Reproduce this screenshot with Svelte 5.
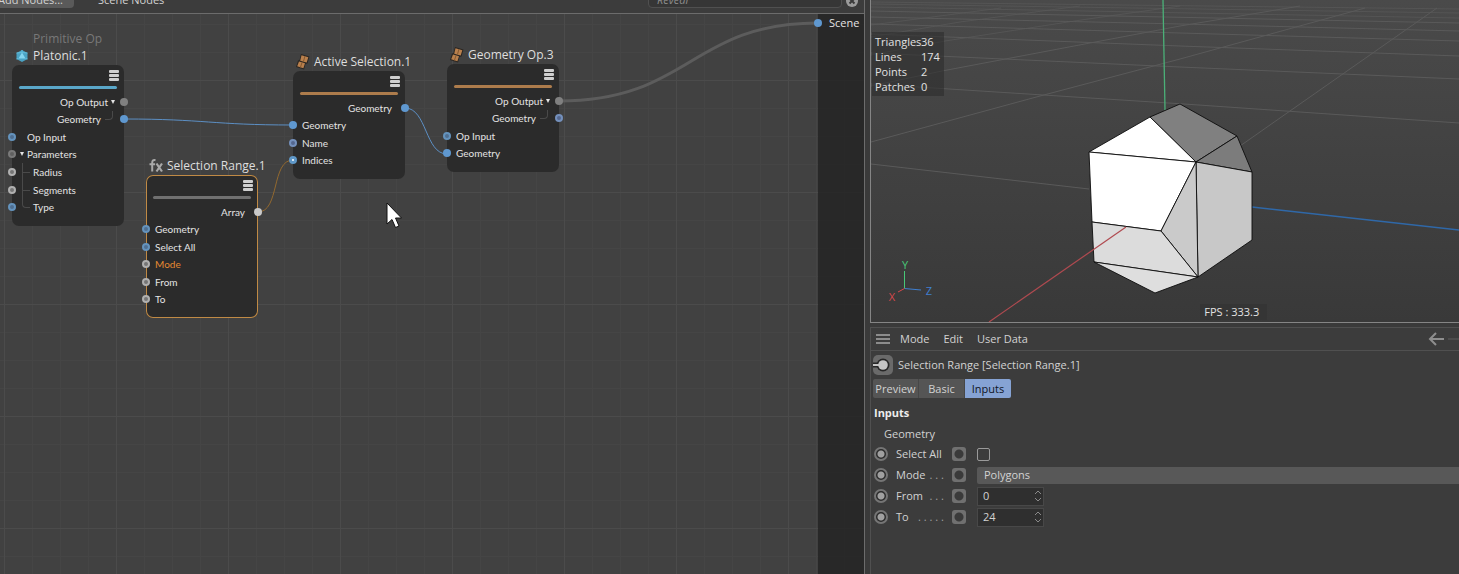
<script>
  // Canvas size follows the pane, the last wire is tied to the scene strip
  let canvasWidth = $state(865);
  const STRIP = 46;
  const NODE_WIDTH = 112;

  let sceneX = $derived(canvasWidth - STRIP);

  let menu = ["Mode", "Edit", "User Data"];
  let tabs = ["Preview", "Basic", "Inputs"];
  let activeTab = $state("Inputs");

  let selectAll = $state(false);
  let mode = $state("Polygons");
  let from = $state(0);
  let to = $state(24);

  let stats = [
    ["Triangles", 36],
    ["Lines", 174],
    ["Points", 2],
    ["Patches", 0],
  ];

  let nodes = [
    {
      title: "Platonic.1",
      sub: "Primitive Op",
      icon: "platonic",
      accent: "blue",
      x: 12,
      y: 51,
      rows: [
        { label: "Op Output", side: "out", port: "grey", arrow: true },
        { label: "Geometry", side: "out", port: "on", branch: true },
        { label: "Op Input", side: "in", port: "blue", gap: true },
        { label: "Parameters", side: "in", port: "dim", arrow: true },
        { label: "Radius", side: "in", port: "light", branch: true },
        { label: "Segments", side: "in", port: "light", branch: true },
        { label: "Type", side: "in", port: "blue", branch: true },
      ],
    },
    {
      title: "Active Selection.1",
      icon: "geo",
      accent: "orange",
      x: 293,
      y: 57,
      rows: [
        { label: "Geometry", side: "out", port: "on" },
        { label: "Geometry", side: "in", port: "on" },
        { label: "Name", side: "in", port: "violet" },
        { label: "Indices", side: "in", port: "array" },
      ],
    },
    {
      title: "Geometry Op.3",
      icon: "geo",
      accent: "orange",
      x: 447,
      y: 50,
      rows: [
        { label: "Op Output", side: "out", port: "grey", arrow: true },
        { label: "Geometry", side: "out", port: "violet", branch: true },
        { label: "Op Input", side: "in", port: "blue" },
        { label: "Geometry", side: "in", port: "on" },
      ],
    },
    {
      title: "Selection Range.1",
      icon: "fx",
      accent: "grey",
      selected: true,
      x: 146,
      y: 161,
      rows: [
        { label: "Array", side: "out", port: "white" },
        { label: "Geometry", side: "in", port: "blue" },
        { label: "Select All", side: "in", port: "blue" },
        { label: "Mode", side: "in", port: "light", hot: true },
        { label: "From", side: "in", port: "light" },
        { label: "To", side: "in", port: "light" },
      ],
    },
  ];

  const nodeHeight = (node) => 38 + Math.ceil((node.rows.length * 35) / 2);
</script>

<div class="app">
  <section class="editor">
    <header class="toolbar">
      <button class="toolbar__add">Add Nodes...</button>
      <span class="toolbar__title">Scene Nodes</span>
      <input class="toolbar__search" type="text" placeholder="Reveal" aria-label="Reveal" />
      <button class="toolbar__clear" aria-label="Clear">
        <svg width="14" height="14" viewBox="0 0 14 14">
          <circle cx="7" cy="7" r="6" fill="#9b9b9b" />
          <path d="M4.500 4.500l5 5M9.500 4.500l-5 5" stroke="#3a3a3a" stroke-width="2" />
        </svg>
      </button>
    </header>

    <div class="canvas" bind:clientWidth={canvasWidth}>
      <div class="strip"></div>
      <svg class="wires">
        <path class="wire wire--op" d="M559 87C690 87 690 9 {sceneX} 9" />
        <path class="wire wire--geo" d="M124 105C205 105 212 111 293 111" />
        <path class="wire wire--geo" d="M405 94C427 94 425 140 447 140" />
        <path class="wire wire--array" d="M258 198C280 198 271 146 293 146" />
      </svg>

      <div class="scene">
        <i class="port port--on"></i>
        <span>Scene</span>
      </div>

      {#each nodes as node}
        <article
          class="node"
          class:node--selected={node.selected}
          style="left: {node.x}px; top: {node.y}px; width: {NODE_WIDTH}px; height: {nodeHeight(node)}px"
        >
          <div class="node__title">
            {#if node.sub}
              <small>{node.sub}</small>
            {/if}
            {#if node.icon == "platonic"}
              <svg width="14" height="14" viewBox="0 0 14 14">
                <path d="M7 1l5.500 3v6L7 13 1.500 10V4z" fill="#4aa3c4" />
                <path d="M7 3.500l3.500 6h-7z" fill="#84d6f0" />
                <path d="M7 1v2.500L1.500 4M7 3.500l5.500.5M3.500 9.500l-2 .5M10.500 9.500l2 .5" stroke="#63bddb" fill="none" />
              </svg>
            {:else if node.icon == "geo"}
              <svg width="14" height="16" viewBox="0 0 14 16">
                <path d="M5 0l8.500 2.500-2 7-2 .5-1.500 5.500L0 13 2 6.500l1.500-.5z" fill="#2b2622" />
                <path d="M5.500 1.200l6.800 2-1.600 5.300L4.200 6.700zM3 7.500l6 1.800-1.600 5L1.200 12.300z" fill="#b9804d" />
                <path d="M9 2L7.400 7.700M6 8.500L4.400 13.500" stroke="#84582f" />
              </svg>
            {:else}
              <svg width="14" height="14" viewBox="0 0 14 14">
                <path d="M6.500 1.200C4 .6 3.200 1.800 3.200 4v8.500M0.500 5.300h5.500" stroke="#a9a9a9" stroke-width="2" fill="none" />
                <path d="M7.500 4.500l5.500 8M13 4.500l-5.500 8" stroke="#a9a9a9" stroke-width="2.200" />
              </svg>
            {/if}
            <h2>{node.title}</h2>
          </div>

          <button class="node__menu" aria-label="{node.title} menu"><i></i><i></i><i></i></button>
          <div class="node__accent node__accent--{node.accent}"></div>

          <ul class="rows">
            {#each node.rows as row, i}
              <li class="row row--{row.side}">
                {#if row.side == "in"}
                  <i class="port port--{row.port}"></i>
                  {#if row.arrow}
                    <i class="arrow"></i>
                  {:else if row.branch}
                    <i class="branch" class:branch--last={!node.rows[i + 1]}></i>
                  {/if}
                  <span class:gap={row.gap} class:hot={row.hot} class:tight={row.arrow || row.branch}>{row.label}</span>
                {:else}
                  <span>{row.label}</span>
                  {#if row.arrow}
                    <i class="arrow"></i>
                  {:else if row.branch}
                    <i class="branch branch--last"></i>
                  {/if}
                  <i class="port port--{row.port}"></i>
                {/if}
              </li>
            {/each}
          </ul>
        </article>
      {/each}

      <svg class="cursor" width="16" height="28" viewBox="0 0 16 28">
        <path d="M1 1v21l5-4.500 3.500 8 3.500-1.500-3.500-8h6z" fill="#fff" stroke="#111" />
      </svg>
    </div>
  </section>

  <div class="side">
    <section class="viewport">
      <svg class="viewport__scene" viewBox="871 0 588 322" preserveAspectRatio="xMinYMin slice">
        <g class="grid">
          <path d="M871 164L1089 189M871 84L1184 104 1459 123M871 53L1180 67 1459 79M871 34L1180 46 1459 56" />
          <path d="M871 24L1180 33 1459 41M871 17L1180 24 1459 31M871 11L1459 23" />
          <path d="M871 7L1459 18M871 4L1459 13M871 2L1459 9" opacity=".7" />
          <path d="M871 142L1040 96 1180 59 1365 8M1240 146L1437 8M871 86L942 71 1180 26 1300 6" />
          <path d="M871 55L945 41 1081 20 1180 6M871 37L960 22 1080 6M871 25L1001 8" opacity=".7" />
        </g>
        <path d="M1163 0L1165 110" stroke="#4bb078" stroke-width="1.300" />
        <path d="M1252 207L1459 230" stroke="#2f68a8" stroke-width="1.300" />

        <g class="solid">
          <path d="M1150 117L1180 104 1237 136 1196 162z" fill="#808080" />
          <path d="M1237 136L1252 172 1196 162z" fill="#7c7c7c" />
          <path d="M1089 152L1150 117 1196 162z" fill="#fff" />
          <path d="M1089 152L1196 162 1161 231 1092 222z" fill="#fff" />
          <path d="M1196 162L1252 172V240L1198 277z" fill="#c8c8c8" />
          <path d="M1196 162L1198 277 1161 231z" fill="#cacaca" />
          <path d="M1092 222L1161 231 1198 277 1094 262z" fill="#dcdcdc" />
          <path d="M1094 262L1198 277 1155 293z" fill="#dedede" />
        </g>
        <path d="M1126 227L989 322" stroke="#b04a50" stroke-width="1.200" />

        <g class="gizmo">
          <path d="M904.500 288.500V271" stroke="#48c878" />
          <path d="M904.500 288.500L921 290" stroke="#3f7fd0" />
          <path d="M904.500 288.500L898 292" stroke="#d8484c" />
          <text x="905" y="269" fill="#48c878">Y</text>
          <text x="929" y="295" fill="#3f7fd0">Z</text>
          <text x="892" y="301" fill="#d8484c">X</text>
        </g>
      </svg>

      <dl class="stats">
        {#each stats as [name, count]}
          <dt>{name}</dt>
          <dd>{count}</dd>
        {/each}
      </dl>
      <div class="fps">FPS : 333.3</div>
    </section>

    <section class="panel">
      <nav class="menu">
        <button class="menu__burger" aria-label="Menu"><i></i><i></i><i></i></button>
        {#each menu as item}
          <button>{item}</button>
        {/each}
        <button class="menu__back" aria-label="Back">
          <svg width="31" height="14" viewBox="0 0 31 14" fill="none" stroke-width="2">
            <path d="M8 1L2 7l6 6M2 7h14" stroke="#8e8e8e" />
            <path d="M20 7h14" stroke="#4c4c4c" />
          </svg>
        </button>
      </nav>

      <div class="object">
        <svg width="20" height="20" viewBox="0 0 20 20">
          <rect width="20" height="20" rx="5" fill="#6a6a6a" />
          <path d="M0 10h6" stroke="#262626" stroke-width="5" />
          <circle cx="10" cy="10" r="6.500" fill="#262626" />
          <path d="M0 10h8" stroke="#c4c4c4" stroke-width="2" />
          <circle cx="10" cy="10" r="4.800" fill="#c4c4c4" />
        </svg>
        <span>Selection Range [Selection Range.1]</span>
      </div>

      <div class="tabs">
        {#each tabs as tab}
          <button class="tab" class:tab--active={tab == activeTab} onclick={() => (activeTab = tab)}>{tab}</button>
        {/each}
      </div>

      <h3>Inputs</h3>
      <p class="group">Geometry</p>

      <div class="fields">
        {#snippet lead(id, label, dots)}
          <button class="key" aria-label="Keyframe {label}"></button>
          <label for={id}>{label}<span>{dots}</span></label>
          <button class="socket" aria-label="Port {label}"></button>
        {/snippet}

        <div class="field">
          {@render lead("select-all", "Select All", "")}
          <input id="select-all" type="checkbox" bind:checked={selectAll} />
        </div>
        <div class="field">
          {@render lead("mode", "Mode", ". . .")}
          <select id="mode" bind:value={mode}>
            <option>Points</option>
            <option>Edges</option>
            <option>Polygons</option>
          </select>
        </div>
        <div class="field">
          {@render lead("from", "From", ". . .")}
          <div class="number">
            <input id="from" type="number" bind:value={from} />
            <svg width="8" height="12" viewBox="0 0 8 12"><path d="M1 4l3-3 3 3M1 8l3 3 3-3" /></svg>
          </div>
        </div>
        <div class="field">
          {@render lead("to", "To", ". . . . .")}
          <div class="number">
            <input id="to" type="number" bind:value={to} />
            <svg width="8" height="12" viewBox="0 0 8 12"><path d="M1 4l3-3 3 3M1 8l3 3 3-3" /></svg>
          </div>
        </div>
      </div>
    </section>
  </div>
</div>

<style>
  :global(body) {
    margin: 0;
    background: #3a3a3a;
  }

  .app {
    display: grid;
    grid-template-columns: 865fr 589fr;
    column-gap: 5px;
    height: 100vh;
    overflow: hidden;
    color: #d2d2d2;
    background: #3a3a3a;
    font-family: "Open Sans", "Noto Sans", sans-serif;
    font-size: 11px;
    line-height: 16px;
  }

  button,
  input,
  select {
    margin: 0;
    padding: 0;
    border: 0;
    background: none;
    color: inherit;
    font: inherit;
  }

  h2,
  h3,
  p,
  ul,
  dl,
  dd {
    margin: 0;
    padding: 0;
  }

  /* node editor */
  .editor {
    display: flex;
    flex-direction: column;
    min-width: 0;
    border-right: 1px solid #6c6c6c;
  }

  .toolbar {
    display: flex;
    align-items: flex-end;
    box-sizing: border-box;
    height: 14px;
    padding-bottom: 5px;
    overflow: hidden;
    background: #3c3c3c;
    border-bottom: 1px solid #6c6c6c;
  }

  .toolbar__add {
    display: flex;
    justify-content: flex-end;
    width: 74px;
    height: 16px;
    padding-right: 11px;
    white-space: nowrap;
    background: #5a5a5a;
    border-radius: 0 0 4px 0;
  }

  .toolbar__title {
    flex: 1;
    height: 16px;
    padding-left: 24px;
  }

  .toolbar__search {
    box-sizing: border-box;
    width: 194px;
    height: 17px;
    padding-left: 8px;
    font-style: italic;
    background: #363636;
    border: 1px solid #505050;
    border-radius: 0 0 4px 4px;
  }

  .toolbar__search::placeholder {
    color: #8c8c8c;
  }

  .toolbar__clear {
    display: flex;
    margin: 0 5px 0 3px;
  }

  .canvas {
    position: relative;
    flex: 1;
    overflow: hidden;
    background:
      repeating-linear-gradient(90deg, #4b4b4b 0 1px, transparent 1px 112px) 4px 0,
      repeating-linear-gradient(#4b4b4b 0 1px, transparent 1px 112px) 0 -46px,
      repeating-linear-gradient(90deg, #454545 0 1px, transparent 1px 28px) 4px 0,
      repeating-linear-gradient(#454545 0 1px, transparent 1px 28px) 0 -18px,
      #414141;
  }

  .strip {
    position: absolute;
    top: 0;
    right: 0;
    bottom: 0;
    width: 46px;
    background: rgba(34, 34, 34, 0.8);
  }

  .wires {
    position: absolute;
    inset: 0;
    width: 100%;
    height: 100%;
  }

  .wire {
    fill: none;
    stroke-width: 1px;
  }

  .wire--op {
    stroke: #5c5c5c;
    stroke-width: 3px;
  }

  .wire--geo {
    stroke: #5c8fc4;
  }

  .wire--array {
    stroke: #93692f;
  }

  .scene {
    position: absolute;
    top: 1px;
    right: 5px;
    display: flex;
    align-items: center;
    gap: 7px;
    width: 45px;
    color: #e4e4e4;
  }

  .node {
    position: absolute;
    display: flex;
    flex-direction: column;
    box-sizing: border-box;
    padding: 5px 0 10px;
    background: #2b2b2b;
    border-radius: 7px;
  }

  .node--selected {
    box-shadow: inset 0 0 0 1px #c08a45;
  }

  .node__title {
    position: absolute;
    bottom: 100%;
    left: 3px;
    display: grid;
    grid-template-columns: 14px auto;
    align-items: center;
    column-gap: 4px;
    padding-bottom: 1px;
    white-space: nowrap;
  }

  .node__title small,
  .node__title h2 {
    grid-column: 2;
    font-size: 12px;
    font-weight: 400;
    line-height: 17px;
    color: #dedede;
  }

  .node__title small {
    color: #787878;
  }

  .node__menu {
    align-self: flex-end;
    display: grid;
    gap: 1px;
    margin: 0 5px 5px 0;
  }

  .node__menu i {
    width: 10px;
    height: 3px;
    background: #cfcfcf;
    border-radius: 1px;
  }

  .node__accent {
    height: 3px;
    margin: 0 7px 4px;
    border-radius: 2px;
  }

  .node__accent--blue {
    background: #5aa7c9;
  }

  .node__accent--orange {
    background: #ad7c4c;
  }

  .node__accent--grey {
    background: #707070;
  }

  .rows {
    flex: 1;
    display: grid;
    grid-auto-rows: 1fr;
    list-style: none;
  }

  .row {
    position: relative;
    display: flex;
    align-items: center;
    min-height: 0;
    margin: 0 -4px;
    font-family: Lato, "Open Sans", sans-serif;
    font-size: 10px;
    line-height: 16px;
    color: #e4e4e4;
    white-space: nowrap;
  }

  .row--out {
    justify-content: flex-end;
  }

  .row--in span {
    margin-left: 5px;
  }

  .row--in .gap {
    margin-left: 11px;
  }

  .row--in .tight {
    margin-left: 3px;
  }

  .row--out > span:has(+ .port) {
    margin-right: 9px;
  }

  .row .hot {
    color: #e58a32;
  }

  .port {
    flex: none;
    box-sizing: border-box;
    width: 8px;
    height: 8px;
    border-radius: 50%;
    background: #6b6b6b;
  }

  .port--on {
    background: #5f98d0;
  }

  .port--grey {
    background: #808080;
  }

  .port--white {
    background: #c9c9c9;
  }

  .port--blue {
    background: #4f6f91;
    border: 2px solid #6493bd;
  }

  .port--violet {
    background: #54678f;
    border: 2px solid #7490bc;
  }

  .port--dim {
    background: #606060;
    border: 2px solid #7a7a7a;
  }

  .port--light {
    background: #757575;
    border: 2px solid #b0b0b0;
  }

  .port--array {
    background: #fff;
    border: 3px solid #5f98c8;
  }

  .arrow {
    width: 0;
    border: 2px solid transparent;
    border-top: 4px solid #e4e4e4;
    border-bottom: 0;
  }

  .row--out .arrow {
    margin: 0 5px 0 3px;
  }

  .row--in .arrow {
    margin-left: 4px;
  }

  /* elbow that hangs a child port under its group */
  .branch {
    align-self: flex-start;
    width: 7px;
    height: 50%;
    margin-left: 6px;
    border-left: 1px solid #4a4a4a;
    border-bottom: 1px solid #4a4a4a;
  }

  .row--in .branch--last {
    border-bottom-left-radius: 4px;
  }

  .row--in .branch:not(.branch--last)::after {
    content: "";
    position: absolute;
    top: 50%;
    bottom: 0;
    left: 14px;
    border-left: 1px solid #4a4a4a;
  }

  .row--out .branch {
    margin: 0 7px 0 4px;
    border-left: 0;
    border-right: 1px solid #4a4a4a;
    border-bottom-right-radius: 4px;
  }

  .cursor {
    position: absolute;
    left: 386px;
    top: 188px;
  }

  /* right column */
  .side {
    display: flex;
    flex-direction: column;
    gap: 4px;
    min-width: 0;
  }

  .viewport {
    position: relative;
    flex: 1;
    min-height: 0;
    overflow: hidden;
    border-left: 1px solid #858585;
    border-bottom: 1px solid #858585;
    background: linear-gradient(#4a4a4a, #393939);
  }

  .viewport__scene {
    display: block;
    width: 100%;
    height: 100%;
  }

  .grid path {
    fill: none;
    stroke: #5a5a5a;
  }

  .solid path {
    stroke: #0c0c0c;
    stroke-width: 0.9;
    stroke-linejoin: round;
  }

  .gizmo text {
    font-size: 11px;
    text-anchor: middle;
  }

  .stats {
    position: absolute;
    top: 32px;
    left: 1px;
    display: grid;
    grid-template-columns: 46px 22px;
    padding: 2px 1px 2px 3px;
    line-height: 15px;
    color: #e2e2e2;
    background: rgba(45, 45, 45, 0.6);
  }

  .fps {
    position: absolute;
    left: 56%;
    bottom: 2px;
    padding: 0 8px 0 4px;
    color: #e2e2e2;
    background: #353535;
  }

  .panel {
    min-height: 246px;
    background: #3c3c3c;
    border-top: 1px solid #505050;
    border-left: 1px solid #505050;
  }

  .menu {
    display: flex;
    align-items: center;
    gap: 14px;
    height: 22px;
    padding-left: 5px;
    border-bottom: 1px solid #505050;
  }

  .menu__burger {
    display: grid;
    gap: 2px;
    margin-right: -4px;
  }

  .menu__burger i {
    width: 14px;
    height: 2px;
    background: #8c8c8c;
  }

  .menu__back {
    display: flex;
    margin-left: auto;
  }

  .object {
    display: flex;
    align-items: center;
    gap: 5px;
    height: 28px;
    padding-left: 2px;
  }

  .tabs {
    display: flex;
    padding-left: 2px;
  }

  .tab {
    width: 46px;
    height: 19px;
    padding-top: 1px;
    background: #555;
    border-right: 1px solid #474747;
  }

  .tab:first-child {
    border-radius: 2px 0 0 2px;
  }

  .tab--active {
    color: #10151f;
    background: #86a3d4;
    border: 0;
    border-radius: 0 2px 2px 0;
  }

  h3 {
    padding: 7px 0 0 3px;
    font-size: 11px;
    font-weight: 700;
    color: #ececec;
  }

  .group {
    padding: 5px 0 2px 13px;
  }

  .fields {
    display: grid;
    row-gap: 1px;
  }

  .field {
    display: grid;
    grid-template-columns: 14px 56px 14px 1fr;
    align-items: center;
    height: 20px;
    padding-left: 3px;
  }

  .field label {
    display: flex;
    justify-content: space-between;
    padding-left: 8px;
    white-space: nowrap;
  }

  .field label span {
    color: #a0a0a0;
  }

  .field label + .socket {
    margin-left: 8px;
  }

  .field > :last-child {
    margin-left: 19px;
  }

  .key,
  .socket {
    width: 14px;
    height: 14px;
    box-sizing: border-box;
  }

  .key {
    border: 2px solid #757575;
    border-radius: 50%;
    background: radial-gradient(#a0a0a0 0 3px, #2b2b2b 4px);
  }

  .socket {
    border-radius: 3px;
    background: radial-gradient(#3a3a3a 0 4px, #707070 5px);
  }

  input[type="checkbox"] {
    appearance: none;
    box-sizing: border-box;
    width: 13px;
    height: 13px;
    border: 1px solid #9a9a9a;
    border-radius: 2px;
  }

  select {
    appearance: none;
    height: 17px;
    padding-left: 7px;
    background: #585858;
    border-radius: 2px 0 0 2px;
  }

  .number {
    display: flex;
    align-items: center;
    box-sizing: border-box;
    width: 67px;
    height: 19px;
    padding: 0 1px 0 5px;
    background: #2f2f2f;
    border: 1px solid #484848;
  }

  .number input {
    flex: 1;
    min-width: 0;
    appearance: textfield;
  }

  .number input::-webkit-inner-spin-button {
    appearance: none;
  }

  .number path {
    fill: none;
    stroke: #8a8a8a;
  }
</style>
